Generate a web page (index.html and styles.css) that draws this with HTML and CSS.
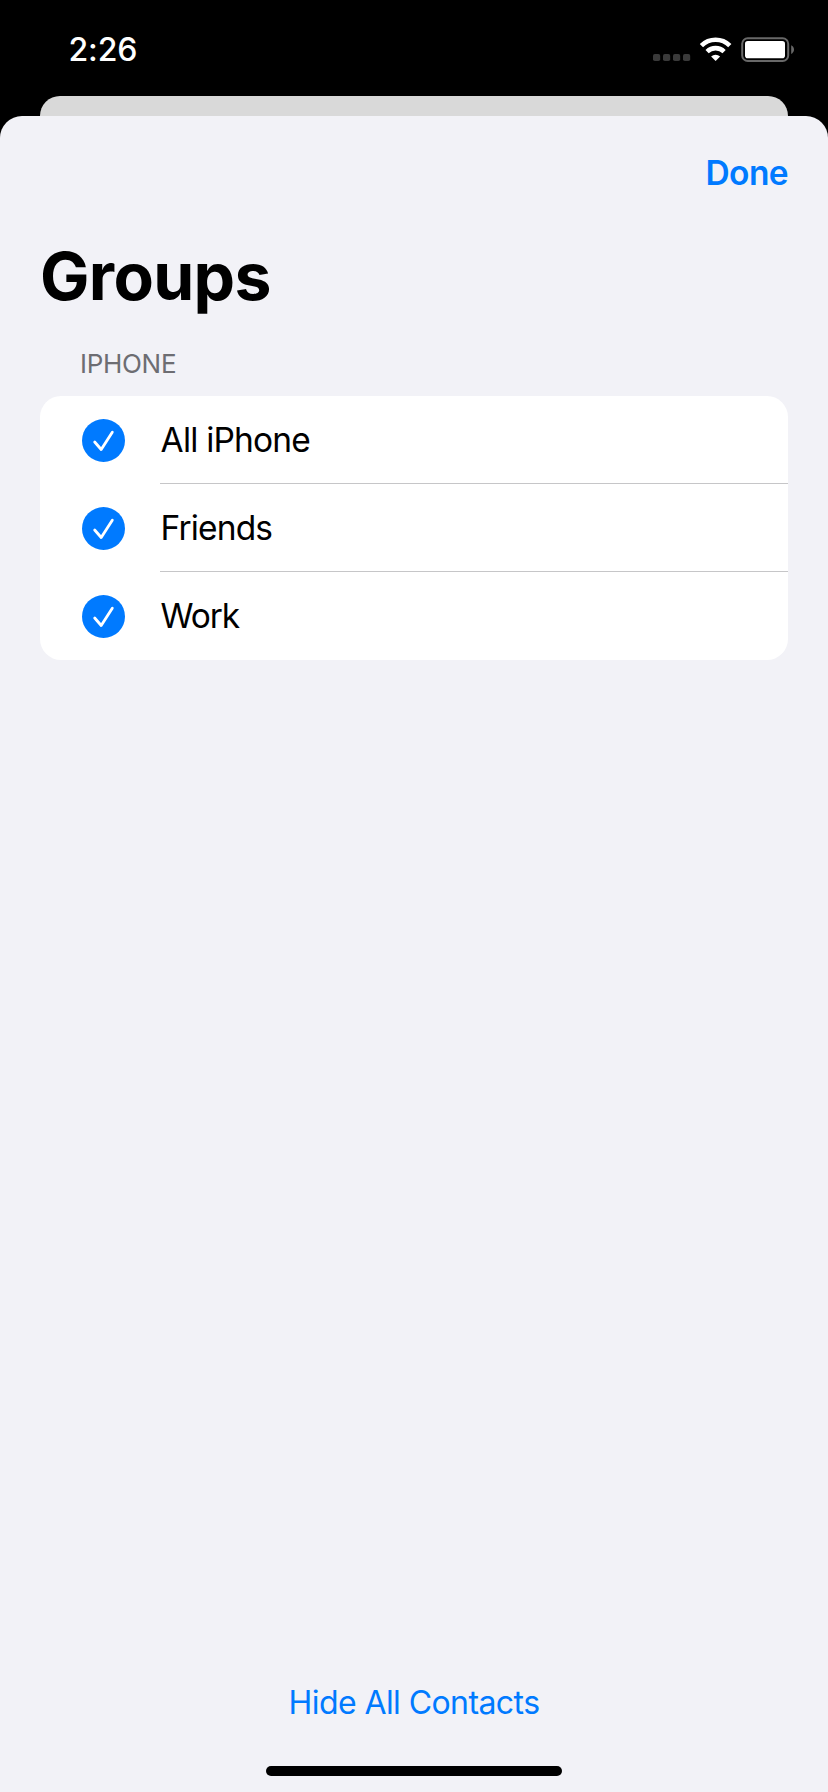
FILE: index.html
```html
<!DOCTYPE html>
<html lang="en">
<head>
<meta charset="utf-8">
<title>Groups</title>
<link rel="stylesheet" href="styles.css">
</head>
<body>
<div class="screen">
  <header class="status">
    <span class="time">2:26</span>
    <svg class="status-icons" width="142" height="26" viewBox="0 0 142 26">
      <g fill="#3a3a3a">
        <rect x="0" y="17" width="7.2" height="7" rx="1.8"/>
        <rect x="10" y="17" width="7.2" height="7" rx="1.8"/>
        <rect x="20" y="17" width="7.2" height="7" rx="1.8"/>
        <rect x="30" y="17" width="7.2" height="7" rx="1.8"/>
      </g>
      <g fill="none" stroke="#fff" stroke-width="4.6">
        <path d="M48.4 8.6A20.3 20.3 0 0 1 76.8 8.6"/>
        <path d="M54.1 14.6A12.2 12.2 0 0 1 71.1 14.6"/>
      </g>
      <path d="M62.6 24.1l-4.5-4.6a6.500 6.500 0 0 1 9 0z" fill="#fff"/>
      <rect x="89.200" y="1.200" width="46" height="22.800" rx="5.600" fill="none" stroke="#686868" stroke-width="2"/>
      <rect x="92" y="4" width="40" height="17.200" rx="2.800" fill="#fff"/>
      <path d="M138.200 8.200c1.700.8 2.800 2.500 2.800 4.400s-1.100 3.600-2.800 4.400z" fill="#686868"/>
    </svg>
  </header>
  <div class="back-card"></div>
  <main class="sheet">
    <nav class="nav"><a class="done">Done</a></nav>
    <h1 class="title">Groups</h1>
    <h2 class="section">IPHONE</h2>
    <ul class="list">
      <li class="row"><svg class="check" viewBox="0 0 43 43"><circle cx="21.5" cy="21.500" r="21.500"/><path d="M12.700 23L19.200 30.500L30.300 13.200"/></svg><span class="label">All iPhone</span></li>
      <li class="row"><svg class="check" viewBox="0 0 43 43"><circle cx="21.5" cy="21.500" r="21.500"/><path d="M12.700 23L19.200 30.500L30.300 13.200"/></svg><span class="label friends">Friends</span></li>
      <li class="row"><svg class="check" viewBox="0 0 43 43"><circle cx="21.5" cy="21.500" r="21.500"/><path d="M12.700 23L19.200 30.500L30.300 13.200"/></svg><span class="label work">Work</span></li>
    </ul>
    <footer class="footer">
      <a class="hide">Hide All Contacts</a>
      <div class="home"></div>
    </footer>
  </main>
</div>
</body>
</html>
```
FILE: styles.css
```css
* { box-sizing: border-box; margin: 0; padding: 0; }
body { background: #000; font-family: Inter, "Liberation Sans", sans-serif; }
.screen { width: 828px; height: 1792px; display: flex; flex-direction: column; overflow: hidden; background: #000; }
.status { height: 96px; display: flex; justify-content: space-between; padding: 0 33px 0 68.5px; }
.time { color: #fff; font-size: 32px; font-weight: 500; line-height: 100px; letter-spacing: -0.1px; }
.status-icons { margin-top: 37px; width: 142px; flex: none; }
.back-card { height: 20px; margin: 0 40px; background: #d9d9d9; border-radius: 20px 20px 0 0; }
.sheet { flex: 1; display: flex; flex-direction: column; background: #f2f2f7; border-radius: 22px 22px 0 0; padding: 34px 40px 0; }
.nav { height: 85px; display: flex; justify-content: flex-end; }
.done { color: #007aff; font-size: 33.5px; font-weight: 600; line-height: 46px; letter-spacing: -0.6px; }
.title { font-size: 66px; font-weight: 700; line-height: 82px; letter-spacing: -0.7px; }
.section { margin: 31px 0 16px 40px; color: #6d6d72; font-size: 26px; font-weight: 400; line-height: 32px; letter-spacing: -0.3px; }
.list { list-style: none; background: #fff; border-radius: 21px; overflow: hidden; }
.row { height: 88px; display: flex; align-items: center; padding-left: 42px; }
.check { width: 43px; height: 43px; margin-right: 35px; flex: none; }
.check circle { fill: #007aff; }
.check path { fill: none; stroke: #fff; stroke-width: 2.8; stroke-linecap: round; stroke-linejoin: round; }
.label { flex: 1; font-size: 33.5px; line-height: 88px; height: 88px; letter-spacing: -0.8px; padding-left: 0.6px; border-bottom: 1px solid #c6c6c8; }
.row:last-child .label { border-bottom-color: transparent; }
.friends { letter-spacing: -0.85px; }
.work { letter-spacing: -1.1px; }
.footer { margin-top: auto; height: 112px; display: flex; flex-direction: column; align-items: center; }
.hide { color: #007aff; font-size: 32px; line-height: 45px; letter-spacing: -0.58px; }
.home { width: 296px; height: 10px; border-radius: 5px; background: #000; margin-top: 41px; }
```
